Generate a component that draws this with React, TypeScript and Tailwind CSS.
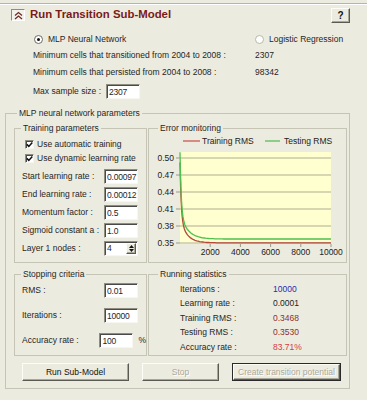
import type { ReactNode } from 'react'

const sunken =
  'border border-t-[#8f8d80] border-l-[#8f8d80] border-r-[#f7f6f0] border-b-[#f7f6f0] shadow-[inset_1px_1px_0_#4a4a4a] bg-white'
const raised =
  'border border-t-[#fdfdf8] border-l-[#fdfdf8] border-r-[#5a5a52] border-b-[#5a5a52] shadow-[inset_-1px_-1px_0_#a9a799] bg-[#ecebdf]'

function GroupBox({
  title,
  legendClass,
  className,
  children,
}: {
  title: string
  legendClass: string
  className?: string
  children: ReactNode
}) {
  return (
    <fieldset className={`min-w-0 border border-[#c6c4b5] ${className ?? ''}`}>
      <legend className={`px-[2px] leading-[11px] ${legendClass}`}>{title}</legend>
      {children}
    </fieldset>
  )
}

function Field({ value, className }: { value: string; className?: string }) {
  return (
    <input
      readOnly
      defaultValue={value}
      className={`${sunken} h-[15px] w-[34px] pl-[2px] pr-0 leading-[13px] tracking-[-0.2px] outline-none ${className ?? ''}`}
    />
  )
}

function Checkbox({ label }: { label: string }) {
  return (
    <div className="flex h-[12px] items-center">
      <span className={`${sunken} flex h-[9px] w-[9px] items-center justify-center`}>
        <svg width="7" height="7" viewBox="0 0 7 7">
          <path d="M0.8 3.4 2.8 5.4 6.3 1.4" fill="none" stroke="#111" strokeWidth="1.5" />
        </svg>
      </span>
      <span className="ml-[3px]">{label}</span>
    </div>
  )
}

function ParamRow({ label, value }: { label: string; value: string }) {
  return (
    <div className="flex h-[15px] items-center pl-[7px]">
      <span className="w-[82px]">{label}</span>
      <Field value={value} />
    </div>
  )
}

function Radio({ checked, label }: { checked?: boolean; label: string }) {
  return (
    <div className="flex items-center">
      <span
        className={`flex h-[9px] w-[9px] items-center justify-center rounded-full border bg-white ${
          checked ? 'border-[#6f6d62]' : 'border-[#b9b7aa]'
        }`}
      >
        {checked && <span className="h-[3px] w-[3px] rounded-full bg-[#111]" />}
      </span>
      <span className="ml-[5px]">{label}</span>
    </div>
  )
}

const xs = (t: number) => 31 + (t / 10000) * 151
const ys = (v: number) => 109 - ((v - 0.35) / 0.03) * 17

function curve(fn: (t: number) => number) {
  const pts: string[] = []
  for (let t = 0; t <= 400; t += 10) pts.push(`${xs(t).toFixed(1)},${ys(fn(t)).toFixed(1)}`)
  for (let t = 500; t <= 10000; t += 100) pts.push(`${xs(t).toFixed(1)},${ys(fn(t)).toFixed(1)}`)
  return pts.join(' ')
}

const testing = (t: number) => 0.357 + 0.108 * Math.exp(-t / 80) + 0.045 * Math.exp(-t / 500)
const training = (t: number) => 0.3502 + 0.1 * Math.exp(-t / 80) + 0.042 * Math.exp(-t / 450)

function ErrorChart() {
  const grid = [0.5, 0.47, 0.44, 0.41, 0.38, 0.35]
  const xticks = [2000, 4000, 6000, 8000, 10000]
  return (
    <svg width="197" height="128" viewBox="0 0 197 128" className="block">
      <line x1="34" y1="7" x2="51" y2="7" stroke="#d06a66" strokeWidth="1.5" />
      <text x="53" y="10" fontSize="8.5" fill="#222">
        Training RMS
      </text>
      <line x1="116" y1="7" x2="131" y2="7" stroke="#6cc46c" strokeWidth="1.5" />
      <text x="135" y="10" fontSize="8.5" fill="#222">
        Testing RMS
      </text>
      <rect x="31" y="18" width="151" height="92" fill="#ffffcf" />
      {grid.map((v) => (
        <g key={v}>
          <line x1="31" y1={ys(v)} x2="182" y2={ys(v)} stroke="#c9c8a6" strokeWidth="1.5" />
          <line x1="27" y1={ys(v)} x2="31" y2={ys(v)} stroke="#9a9a8a" strokeWidth="1" />
          <text x="25" y={ys(v) + 3} fontSize="8.5" fill="#222" textAnchor="end">
            {v.toFixed(2)}
          </text>
        </g>
      ))}
      <polyline points={curve(training)} fill="none" stroke="#b5483c" strokeWidth="1.3" />
      <polyline points={curve(testing)} fill="none" stroke="#4fbf4f" strokeWidth="1.3" />
      {xticks.map((t) => (
        <g key={t}>
          <line x1={xs(t)} y1="110" x2={xs(t)} y2="113" stroke="#9a9a8a" strokeWidth="1" />
          <text x={xs(t)} y="121" fontSize="8.5" fill="#222" textAnchor="middle">
            {t}
          </text>
        </g>
      ))}
    </svg>
  )
}

function StatRow({ label, value, color }: { label: string; value: string; color: string }) {
  return (
    <div className="flex h-[14.5px] items-center pl-[31px]">
      <span className="w-[93px]">{label}</span>
      <span className={color}>{value}</span>
    </div>
  )
}

export default function App() {
  return (
    <div className="h-[400px] w-[367px] overflow-hidden bg-[#ecebdf] font-['Liberation_Sans',Arial,sans-serif] text-[8.5px] text-[#262626]">
      <div className="mt-[3px] border-t border-[#b7b5a7]">
        <div className="border-t border-white" />
        <div className="mt-[2px] flex h-[16px] items-center">
          <div className="ml-[11px] flex h-[12px] w-[14px] items-center justify-center border border-t-[#8f8d80] border-l-[#8f8d80] border-r-white border-b-white bg-[#f3f2ea]">
            <svg width="9" height="9" viewBox="0 0 9 9">
              <path d="M1 4.5 4.5 1.5 8 4.5M1 8 4.5 5 8 8" fill="none" stroke="#6f2a2a" strokeWidth="1.3" />
            </svg>
          </div>
          <span className="ml-[5px] text-[11.4px] font-bold text-[#7a1a1a]">Run Transition Sub-Model</span>
          <div className={`${raised} ml-auto mr-[17px] flex h-[15px] w-[19px] items-center justify-center text-[10px] font-bold text-[#111]`}>
            ?
          </div>
        </div>

        <div className="mt-[10px] flex h-[12px] items-center pl-[34px]">
          <div className="w-[221px]">
            <Radio checked label="MLP Neural Network" />
          </div>
          <Radio label="Logistic Regression" />
        </div>
        <div className="mt-[4px] flex h-[12px] items-center pl-[33px]">
          <span className="w-[222px]">Minimum cells that transitioned from 2004 to 2008 :</span>
          <span>2307</span>
        </div>
        <div className="mt-[5px] flex h-[12px] items-center pl-[33px]">
          <span className="w-[222px]">Minimum cells that persisted from 2004 to 2008 :</span>
          <span>98342</span>
        </div>
        <div className="mt-[6px] flex h-[15px] items-center pl-[33px]">
          <span className="w-[73px]">Max sample size :</span>
          <Field value="2307" className="w-[33px]" />
        </div>

        <GroupBox title="MLP neural network parameters" legendClass="ml-[11px]" className="ml-[5px] mt-[9px] w-[345px]">
          <div className="pb-[7px] pl-[8px] pr-[2px] pt-[4px]">
            <div className="grid grid-cols-[133px_199px] gap-x-[1px] gap-y-[6px]">
              <GroupBox title="Training parameters" legendClass="ml-[6px]" className="h-[140px]">
                <div className="pl-[10px] pt-[4px]">
                  <Checkbox label="Use automatic training" />
                  <div className="mt-[2px]">
                    <Checkbox label="Use dynamic learning rate" />
                  </div>
                </div>
                <div className="mt-[5px] flex flex-col gap-[3px]">
                  <ParamRow label="Start learning rate :" value="0.00097" />
                  <ParamRow label="End learning rate :" value="0.00012" />
                  <ParamRow label="Momentum factor :" value="0.5" />
                  <ParamRow label="Sigmoid constant a :" value="1.0" />
                  <div className="flex h-[15px] items-center pl-[7px]">
                    <span className="w-[82px]">Layer 1 nodes :</span>
                    <div className={`${sunken} flex h-[15px] w-[34px] items-center`}>
                      <span className="flex-1 pl-[2px]">4</span>
                      <div className={`${raised} mr-[1px] flex h-[11px] w-[10px] flex-col items-center justify-center gap-[1px]`}>
                        <svg width="5" height="3" viewBox="0 0 5 3">
                          <path d="M0 3 2.5 0 5 3Z" fill="#111" />
                        </svg>
                        <svg width="5" height="3" viewBox="0 0 5 3">
                          <path d="M0 0 2.5 3 5 0Z" fill="#111" />
                        </svg>
                      </div>
                    </div>
                  </div>
                </div>
              </GroupBox>

              <GroupBox title="Error monitoring" legendClass="ml-[9px]" className="h-[140px]">
                <ErrorChart />
              </GroupBox>

              <GroupBox title="Stopping criteria" legendClass="ml-[6px]" className="h-[87px]">
                <div className="mt-[3px] flex flex-col gap-[10px]">
                  <ParamRow label="RMS :" value="0.01" />
                  <ParamRow label="Iterations :" value="10000" />
                  <div className="flex h-[15px] items-center pl-[7px]">
                    <span className="w-[82px]">Accuracy rate :</span>
                    <Field value="100" className="w-[25px]" />
                    <span className="ml-[5px]">%</span>
                  </div>
                </div>
              </GroupBox>

              <GroupBox title="Running statistics" legendClass="ml-[9px]" className="h-[87px]">
                <div className="pt-[2px]">
                  <StatRow label="Iterations :" value="10000" color="text-[#2b2bb0]" />
                  <StatRow label="Learning rate :" value="0.0001" color="text-[#222]" />
                  <StatRow label="Training RMS :" value="0.3468" color="text-[#8e2f2f]" />
                  <StatRow label="Testing RMS :" value="0.3530" color="text-[#8e2f2f]" />
                  <StatRow label="Accuracy rate :" value="83.71%" color="text-[#d23b3e]" />
                </div>
              </GroupBox>
            </div>

            <div className="mt-[7px] flex h-[18px]">
              <div className={`${raised} ml-[8px] flex w-[107px] items-center justify-center text-[#111]`}>Run Sub-Model</div>
              <div className={`${raised} ml-[13px] flex w-[77px] items-center justify-center text-[#aca899] [text-shadow:1px_1px_0_#fff]`}>
                Stop
              </div>
              <div className="ml-[13px] flex w-[109px] border border-[#2a2a2a]">
                <div className={`${raised} flex flex-1 items-center justify-center text-[#aca899] [text-shadow:1px_1px_0_#fff]`}>
                  Create transition potential
                </div>
              </div>
            </div>
          </div>
        </GroupBox>
      </div>
    </div>
  )
}
